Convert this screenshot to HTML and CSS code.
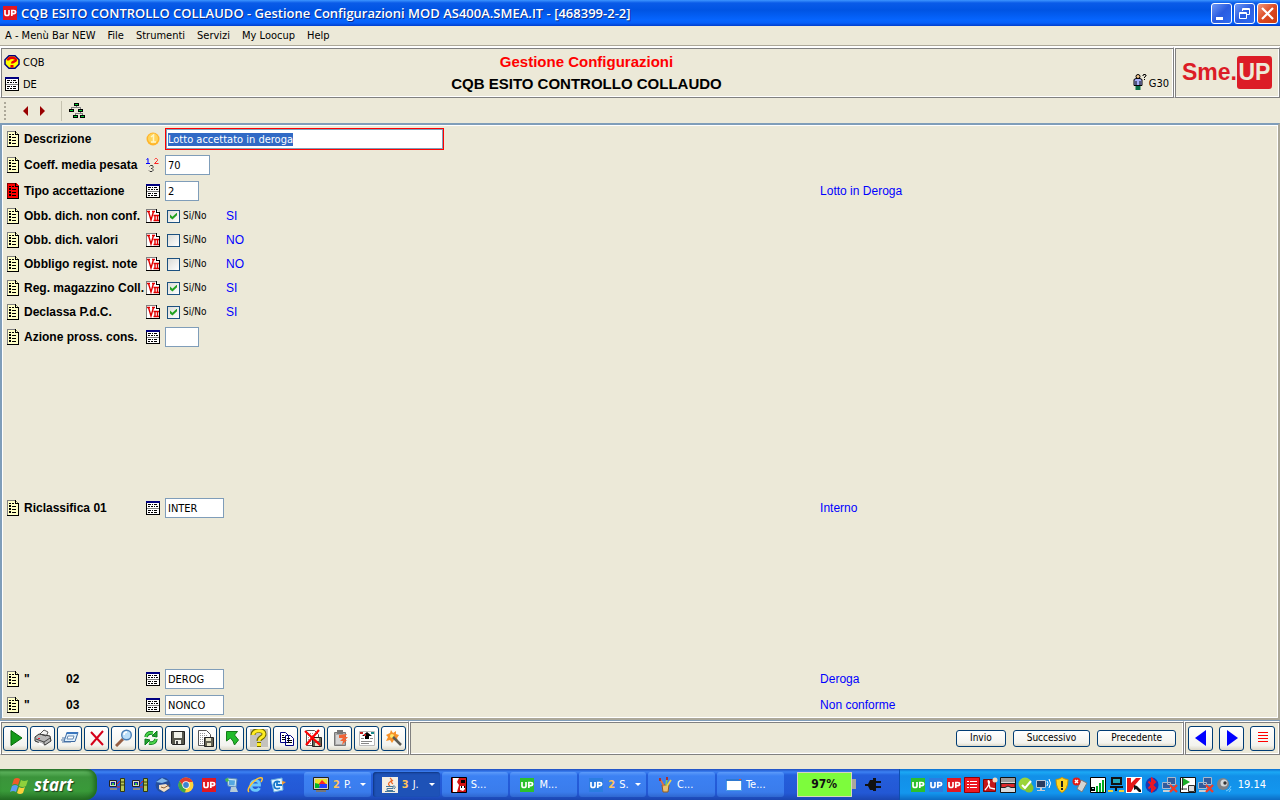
FILE: index.html
```html
<!DOCTYPE html>
<html lang="it">
<head>
<meta charset="utf-8">
<title>CQB ESITO CONTROLLO COLLAUDO</title>
<link rel="stylesheet" href="styles.css">
</head>
<body>
<svg class="sprite" aria-hidden="true">
  <symbol id="list" viewBox="0 0 12 16"><path fill="#ffffc6" d="M0 0h9l3 3v13H0z"/><path fill="#808080" d="M0 0h9v1H0zM0 0h1v15H0zM9 1h1v1H9zM10 2h1v1h-1z"/><path fill="#000" d="M0 15h12v1H0zM11 3h1v13h-1zM8 0h1v3h3v1H8z"/><path fill="#000" d="M2 3h2v1H2zM5 3h2v1H5zM2 5h2v2H2zM5 6h4v1H5zM2 8h2v2H2zM5 9h4v1H5zM2 11h2v2H2zM5 12h4v1H5z"/></symbol>
  <symbol id="list-red" viewBox="0 0 12 16"><path fill="#f00" d="M0 0h9l3 3v13H0z"/><path fill="#800" d="M0 0h9v1H0zM0 0h1v15H0zM9 1h1v1H9z"/><path fill="#000" d="M0 15h12v1H0zM11 3h1v13h-1zM8 0h1v3h3v1H8z"/><path fill="#000" d="M2 3h2v1H2zM5 3h2v1H5zM2 5h2v2H2zM5 6h4v1H5zM2 8h2v2H2zM5 9h4v1H5zM2 11h2v2H2zM5 12h4v1H5z"/></symbol>
  <symbol id="table" viewBox="0 0 14 14"><path fill="#000" d="M0 0h14v14H0z"/><path fill="#000080" d="M0 0h14v2H0z"/><path fill="#fff" d="M1 2h12v11H1z"/><path fill="#000" d="M2 3h3v1H2zM6 3h1v1H6zM8 3h3v1H8zM2 5h2v1H2zM5 5h2v1H5zM8 5h1v1H8zM10 5h2v1h-2zM2 9h3v1H2zM6 9h1v1H6zM8 9h3v1H8zM2 11h2v1H2zM5 11h2v1H5zM8 11h3v1H8z"/><path fill="#808080" d="M1 7h12v1H1z"/></symbol>
  <symbol id="vii" viewBox="0 0 14 14"><path fill="#fff" d="M0 0h10l4 4v10H0z"/><path fill="#808080" d="M0 0h10v1H0zM0 0h1v14H0z"/><path fill="#000" d="M0 13h14v1H0zM13 4h1v10h-1zM10 0h1v3h3v1h-4z"/><path fill="none" stroke="#e00000" stroke-width="1.400" d="M1 2.500h3M6 2.500h3M2.500 2.500 5 11 7.500 2.500M7.500 6.500h5.500M7.500 11.500h5.500M9 6.500v5M11.500 6.500v5"/></symbol>
  <symbol id="coin" viewBox="0 0 14 14"><circle cx="7" cy="7" r="6.500" fill="#ffb52b"/><circle cx="7" cy="6.500" r="5" fill="#ffd45c"/><path fill="none" stroke="#fff6c8" stroke-width="1.500" d="M5 5l2.500-2v7M5 10h5"/></symbol>
  <symbol id="n123" viewBox="0 0 14 14"><path fill="none" stroke="#00f" d="M.5 1.500l1.500-1v5M0 5.500h4"/><path fill="none" stroke="#f22" d="M8.500 1.500l1-1h1l1 1v1l-3 3h4"/><path fill="none" stroke="#333" d="M3.500 8.500l1-1h2l.5 1v1l-1 1h-1 1l1 1v1l-1 1H4l-1-1"/></symbol>
  <symbol id="help-oct" viewBox="0 0 16 14"><path fill="#ff0" stroke="#000080" stroke-width="1.500" d="M5 .8h6l4 4v4.500l-4 4H5l-4-4V4.800z"/><path fill="none" stroke="#e00" stroke-width="2.400" d="M4 5.500C4 2 12 2 12 5c0 2-4 1-4 3.500M6.500 11.200h3"/></symbol>
  <symbol id="tree" viewBox="0 0 16 16"><path fill="none" stroke="#808080" d="M7.500 3v2M2.500 6V4.500h9V6M11.500 9v2M6.500 12v-1.500h7V12"/><path fill="#000" d="M5 0h5v3H5zM0 6h5v3H0zM9 6h5v3H9zM4 12h5v3H4zM11 12h5v3h-5z"/><path fill="#0c3" d="M6 1h3v1H6zM1 7h3v1H1zM10 7h3v1h-3zM5 13h3v1H5zM12 13h3v1h-3z"/></symbol>
  <symbol id="person" viewBox="0 0 13 16"><path fill="#a5adf8" stroke="#000" d="M.5 5.500l2-1h4l2 1v6h-8z"/><circle cx="4.500" cy="2.500" r="2" fill="#f5c78c" stroke="#000"/><path fill="#0a7048" d="M2 12h5v4H2z"/><path stroke="#000" fill="none" d="M2.500 7v5M6.500 7v5M9.500 2V1l1-.5h1l1 .5v1l-1.500 1v1M11 5v1"/></symbol>
  <symbol id="up" viewBox="0 0 16 16"><path fill="currentColor" d="M1 1h14v14H1z"/><path fill="none" stroke="#fff" stroke-width="1.700" d="M3 5v4q0 1.500 2 1.500T7 9V5M9.800 11V5.500h2q1.800 0 1.800 1.600t-1.800 1.600h-2"/></symbol>
  <symbol id="play" viewBox="0 0 18 18"><path fill="#149a18" stroke="#066a09" d="M4 1.500v15L15 9z"/></symbol>
  <symbol id="printer" viewBox="0 0 18 18"><path fill="#f4f4f4" stroke="#555" d="M5 6l5-5 4 2-2 5z"/><path fill="#b8b8b8" stroke="#333" d="M1 8l4-3 11 2 1 5-6 4L1 12z"/><path fill="none" stroke="#444" d="M2 10l8 3 6-4M10 13v3M6 5l6 2"/><path fill="#e23" d="M4 9h2v1H4z"/><path fill="#fff" d="M5 13l5 2-1 2-5-2z"/></symbol>
  <symbol id="window" viewBox="0 0 18 18"><path fill="#dff0fc" stroke="#3b68a0" d="M6 3.500h11l-3 9H3z"/><path fill="#3b76bd" d="M6 3h11l-1 2H5z"/><path fill="#fff" stroke="#6889b0" d="M7 7h6l-1 3H6z"/><path stroke="#4c76a9" d="M1 9h3M0 11h3M1 13h9"/></symbol>
  <symbol id="x" viewBox="0 0 18 18"><path fill="none" stroke="#d50019" stroke-width="2" d="M3 3l12 13M15 2L3 16"/></symbol>
  <symbol id="search" viewBox="0 0 18 18"><path stroke="#965e43" stroke-width="3" d="M1 17l7-7"/><circle cx="11.500" cy="6" r="4.800" fill="#bcdff9" stroke="#4a7fb6" stroke-width="1.400"/><path fill="none" stroke="#fff" stroke-width="1.500" d="M9 6q0-3 3-3"/></symbol>
  <symbol id="refresh" viewBox="0 0 18 18"><path fill="none" stroke="#087a1a" stroke-width="3.600" d="M4 8q1-5 7-4M14 10q-1 5-7 4"/><path fill="none" stroke="#4bd449" stroke-width="2" d="M4 8q1-5 7-4M14 10q-1 5-7 4"/><path fill="#23a52d" stroke="#087a1a" d="M10 7l5 1 0-6zM8 11l-5-1 0 6z"/></symbol>
  <symbol id="save" viewBox="0 0 18 18"><path fill="#57574d" stroke="#222" d="M2.500 2.500h13v13h-12l-1-1z"/><path fill="#f1f1e9" d="M5 3h8v6H5zM6 11h6v4H6z"/><path fill="#444" d="M7 12h2v3H7z"/></symbol>
  <symbol id="docsave" viewBox="0 0 18 18"><path fill="#fff" stroke="#555" d="M2.500 1.500h8l4 4v11h-12z"/><path stroke="#999" stroke-dasharray="1 1" d="M4 4.500h6M4 6.500h8M4 8.500h8M4 10.500h6M4 12.500h4M4 14.500h4"/><path fill="#656354" stroke="#222" d="M8.500 8.500h9v9h-9z"/><path fill="#e7e4c8" d="M10 9h5v3h-5zM11 14h4v3h-4z"/></symbol>
  <symbol id="upleft" viewBox="0 0 18 18"><path fill="#22bb2b" stroke="#147a18" d="M3.500 2.500h11l-3 3.500 4 5-4 5q-1-4-4-7l-4 3z"/></symbol>
  <symbol id="question" viewBox="0 0 18 18"><path fill="#c4c2bd" d="M0 0h18v18H0z"/><path fill="none" stroke="#6e6800" stroke-width="5" d="M3 6C3 0 14 0 14 5c0 4-5 3-5 7M7 15.500h4"/><path fill="none" stroke="#ffed23" stroke-width="3" d="M3 6C3 1 14 0 14 5c0 4-5 3-5 7M7 15.500h4"/></symbol>
  <symbol id="copy" viewBox="0 0 18 18"><path fill="#fff" stroke="#000080" d="M3.500 3.500h5l3 3v7h-8zM8.500 6.500h5l3 3v7h-8z"/><path stroke="#000" d="M5 6.500h2M5 8.500h3M5 10.500h3M10 9.500h3M10 11.500h5M10 13.500h5"/></symbol>
  <symbol id="share" viewBox="0 0 18 18"><path fill="#aaa" stroke="#777" d="M3.500 3.500h11v13h-11z"/><path fill="#d5d5d5" d="M5 6h8v9H5z"/><path fill="#777" d="M6 1h6v4H6z"/><path fill="#f26435" d="M8 6l8-1-2 3h3l-3 3h2l-5 5 1-4H9l3-3H8z"/></symbol>
  <symbol id="upload" viewBox="0 0 18 18"><path fill="#fff" stroke="#bbb" d="M1.500 2.500h15v14h-15z"/><path fill="#000" d="M9 3l5 4h-3v3H7V7H4z"/><path fill="#c42020" d="M2 3h3v2H2zM6 5h2v2H6z"/><path fill="#168a8a" d="M13 3h3v2h-3z"/><path stroke="#888" d="M3 9.500h3M12 9.500h3M3 12.500h11M3 14.500h8"/></symbol>
  <symbol id="wand" viewBox="0 0 18 18"><path fill="#f79229" d="M6 1l2 3 3-2v3l3 1-2 3 1 3-4-1-2 3-2-3-4 1 2-4-2-2 4-2z"/><circle cx="7" cy="7" r="2" fill="#ffe76a"/><path stroke="#5b5b55" stroke-width="2.500" d="M8 8l8 8"/></symbol>
  <symbol id="left" viewBox="0 0 18 18"><path fill="#00f" d="M14 1v16L3 9z"/></symbol>
  <symbol id="right" viewBox="0 0 18 18"><path fill="#00f" d="M4 1v16l11-8z"/></symbol>
  <symbol id="lines" viewBox="0 0 18 18"><path fill="#f00" d="M4 3h10v1H4zM4 6h10v1H4zM4 9h10v1H4zM4 12h10v1H4z"/></symbol>
  <symbol id="nets" viewBox="0 0 16 14"><path fill="#d9d9cc" stroke="#222" d="M.5 2.500h7v6h-7z"/><path fill="#15229e" d="M2 4h4v3H2z"/><path fill="#3c3" d="M3 5h2v2H3z"/><path fill="#888" d="M1 10h7v2H1z"/><path stroke="#d22" d="M8 6l3-3M8 9h3"/><path fill="#b7c653" stroke="#343b0e" d="M11.500.5h4v13h-4z"/><path stroke="#343b0e" d="M12 4h3M12 7h3"/></symbol>
  <symbol id="bird" viewBox="0 0 16 16"><circle cx="8" cy="8" r="7.500" fill="#244e9b"/><path fill="#80b8eb" d="M1 5l6-4 6 3-6 2z"/><path fill="#f2dfc4" d="M4 8l7-1 4 4-6 4-5-3z"/><path stroke="#8c5e35" d="M6 10l3 1 5-3" fill="none"/></symbol>
  <symbol id="chrome" viewBox="0 0 16 16"><circle cx="8" cy="8" r="7.500" fill="#ffd43b"/><path fill="#df3d2f" d="M1.500 4A7.500 7.500 0 0 1 14.800 5H8L5 9z"/><path fill="#3ca64a" d="M1.500 4L6 11l2 1-1 3.500A7.500 7.500 0 0 1 1.500 4z"/><circle cx="8" cy="8" r="3.700" fill="#fff"/><circle cx="8" cy="8" r="2.900" fill="#3d83d2"/></symbol>
  <symbol id="pc" viewBox="0 0 16 16"><path fill="#c9e5f4" stroke="#5e8db7" d="M3 1l10 1-1 8-8-1z"/><path fill="#55a7e1" d="M5 3l6 .5-.5 5L5 8z"/><path fill="#b5cbd8" d="M7 10h5l2 5H6z"/><path fill="#49ba50" d="M1 2l3-1 1 3-3 1z"/></symbol>
  <symbol id="ie" viewBox="0 0 16 16"><path fill="none" stroke="#6cc8fb" stroke-width="2.800" d="M4 8h8.500C13 2 4 2 4 8.500S11 14 12.500 11"/><path fill="none" stroke="#ffc332" stroke-width="1.500" d="M2 15C-2 12 10-1 15 1q1 1-1 4"/></symbol>
  <symbol id="outlook" viewBox="0 0 16 16"><path fill="#e4f5ff" stroke="#69aee0" d="M1 3l11-2 1 12-9 2z"/><path fill="none" stroke="#1676ca" stroke-width="1.800" d="M10 5q-6-2-6 3t6 3M7 5v3h5"/><path fill="#f49b31" d="M12 4l4 1-4 3z"/></symbol>
  <symbol id="monitor" viewBox="0 0 16 16"><path fill="#d2cfbe" stroke="#222" d="M.5.500h15v12H.5z"/><path fill="#eee32c" d="M2 2h12v9H2z"/><path fill="#f22" d="M5 8l4-5 5 5z"/><path fill="#00b52c" d="M2 11V6l4 1 1 4z"/><path fill="#243bff" d="M6 11l1-4h7v4z"/><path fill="#777" d="M3 13h10v2H3z"/></symbol>
  <symbol id="java" viewBox="0 0 16 16"><path fill="#f4eee3" d="M0 0h16v16H0z"/><path fill="none" stroke="#ed6828" stroke-width="1.300" d="M8 1q3 2 0 4t0 4M11 3q-3 2 0 4"/><path fill="none" stroke="#47799b" d="M4 9.500h7v2H5v2h6M3 14.500h10M11 9q4 0 1 3"/></symbol>
  <symbol id="skull" viewBox="0 0 16 16"><path fill="#d41313" stroke="#000" d="M.5.500h15v15H.5z"/><path fill="#fff" d="M2 1h6L6 5l2 3-2 7H2zM9 9h5v3l-2 2-3-1z"/><path fill="#000" d="M10 3h4v3h-4zM10 9h1v2h-1zM13 9h1v2h-1z"/></symbol>
  <symbol id="brushes" viewBox="0 0 16 16"><path fill="#e9bf70" stroke="#8f5d27" d="M5 8h7l-1 7H6z"/><path stroke="#df7440" stroke-width="1.700" d="M7 9L3 2"/><path stroke="#7ec95e" stroke-width="1.700" d="M9 9l1-8"/><path stroke="#f0d04a" stroke-width="1.700" d="M10 9l4-6"/><path fill="#a33" d="M2 1h2v3H2zM9 0h2v3H9z"/></symbol>
  <symbol id="blank" viewBox="0 0 16 16"><path fill="#fff" stroke="#4a9be6" d="M.5 2.500h15v11H.5z"/><path fill="#2e78d0" d="M0 2h16v2H0z"/><path fill="#ed4c24" d="M13 2h2v1h-2z"/></symbol>
  <symbol id="plug" viewBox="0 0 17 13"><path fill="#111" d="M0 6h3l2-4h3V0h3v3h5v2h-5v3h5v2h-5v3H8v-1H5L3 8H0z"/></symbol>
  <symbol id="redlist" viewBox="0 0 16 16"><path fill="#ed1820" stroke="#910008" d="M.5.500h15v15H.5z"/><path fill="#fff" d="M3 4h2v1H3zM6 4h7v1H6zM3 7h2v1H3zM6 7h7v1H6zM3 10h2v1H3zM6 10h7v1H6z"/></symbol>
  <symbol id="pdf" viewBox="0 0 16 16"><path fill="#c51618" stroke="#7a0505" d="M1.500 2.500h12v12h-12z"/><path fill="none" stroke="#fff" stroke-width="1.300" d="M3 13Q9 6 7 4T8 11l5 1"/><circle cx="13" cy="3" r="2.500" fill="#f4d7bd"/></symbol>
  <symbol id="mask" viewBox="0 0 16 16"><path fill="#d7dadb" stroke="#111" d="M.5.500h15v15H.5z"/><path fill="#999" d="M1 1h14v4H1z"/><path fill="#e1282a" stroke="#222" d="M1 6.500h14v4h-4L8 9l-3 1.500H1z"/></symbol>
  <symbol id="skype" viewBox="0 0 16 16"><circle cx="7" cy="7" r="6.500" fill="#9bd438"/><circle cx="11" cy="11" r="4.500" fill="#86c52f"/><path fill="none" stroke="#fff" stroke-width="2" d="M4 8l3 3 6-7"/></symbol>
  <symbol id="pcwave" viewBox="0 0 16 16"><path fill="#283c60" stroke="#b4c8db" d="M.5 3.500h9v7h-9z"/><path fill="#c6cbd0" d="M4 11h2v2h3v1H1v-1h3z"/><path fill="none" stroke="#fff" d="M11 4q2 2 0 5M13 2q3 4 0 9"/></symbol>
  <symbol id="shield" viewBox="0 0 16 16"><path fill="#ffd522" stroke="#c99100" d="M8 .5q3 2 6 2 0 10-6 13-6-3-6-13 3 0 6-2z"/><path fill="#222" d="M7 4h2v6H7zM7 11h2v2H7z"/></symbol>
  <symbol id="usb" viewBox="0 0 16 16"><path fill="#d4d5d2" stroke="#777" d="M9 3l6 3-5 9-5-3z"/><circle cx="4.500" cy="4.500" r="4" fill="#e41c16"/><path stroke="#fff" stroke-width="1.500" d="M3 3l3 3M6 3L3 6"/></symbol>
  <symbol id="bars" viewBox="0 0 16 16"><path fill="#fff" stroke="#000" d="M.5.500h15v15H.5z"/><path fill="#0a2" d="M6 9h2v6H6zM9 6h2v9H9zM12 3h2v12h-2z"/><path fill="#000" d="M1 10h4v4H1z"/><path fill="#9ed" d="M2 11h2v1H2z"/></symbol>
  <symbol id="netpc" viewBox="0 0 16 16"><path fill="#111" d="M3 0h11v8H3zM2 9h13v2H2zM7 11h2v3H7z"/><path fill="#24a9ba" d="M5 2h7v4H5z"/><path fill="#eed43d" d="M0 13h5v2H0zM11 13h5v2h-5z"/></symbol>
  <symbol id="kav" viewBox="0 0 16 16"><path fill="#fff" d="M0 0h16v16H0z"/><path fill="#e51717" d="M1 1h4v5l5-5h5L9 8l-4 7H1z"/><path fill="#111" d="M8 8l3 1 4 4v2h-2l-3-3-2 1z"/></symbol>
  <symbol id="bt" viewBox="0 0 16 16"><ellipse cx="8" cy="8" rx="6.500" ry="7.500" fill="#153ab8"/><path fill="none" stroke="#ef1821" stroke-width="2" d="M4.500 4.500l6.500 6.500-3 3V2l3 3-6.500 6.500"/></symbol>
  <symbol id="netx" viewBox="0 0 16 16"><path fill="#315b9c" stroke="#a9b9cc" d="M5.500.5h8v7h-8zM.5 5.500h8v6h-8z"/><path fill="#c9d0d5" d="M1 13h7v2H1z"/><path stroke="#f23c26" stroke-width="2.300" d="M8 8l7 7M15 8l-7 7"/></symbol>
  <symbol id="db" viewBox="0 0 16 16"><path fill="#fff" stroke="#111" d="M.5.500h15v15H.5z"/><path fill="#19ad27" d="M3 1l7 4-7 4z"/><path fill="#ddd" stroke="#333" d="M8.500 8.500h6v6h-6zM1 12h6M2.500 1v12"/></symbol>
  <symbol id="speaker" viewBox="0 0 16 16"><circle cx="7" cy="7" r="6" fill="#7e8287"/><circle cx="8" cy="6" r="3.500" fill="#d4d9db"/><circle cx="9" cy="6" r="1.700" fill="#333"/><path fill="none" stroke="#7bcfff" d="M10 14q4-1 5-5M13 15l2-3"/></symbol>
</svg>

<header class="titlebar">
  <svg class="i16 red"><use href="#up"/></svg>
  <h1>CQB ESITO CONTROLLO COLLAUDO - Gestione Configurazioni MOD AS400A.SMEA.IT - [468399-2-2]</h1>
  <div class="winbtns">
    <button aria-label="Riduci a icona"><svg viewBox="0 0 19 19"><path fill="#fff" d="M4 13h7v3H4z"/></svg></button>
    <button aria-label="Ripristina"><svg viewBox="0 0 19 19"><path fill="none" stroke="#fff" d="M7.500 7V4.500h7v6H12M4.500 8.500h7v6h-7zM7 5.500h8M4 9.500h8"/></svg></button>
    <button class="close" aria-label="Chiudi"><svg viewBox="0 0 19 19"><path stroke="#fff" stroke-width="2.200" d="M4 4l11 11M15 4L4 15"/></svg></button>
  </div>
</header>
<nav class="menubar">
  <button>A - Menù Bar NEW</button><button>File</button><button>Strumenti</button><button>Servizi</button><button>My Loocup</button><button>Help</button>
</nav>
<section class="head">
  <div class="panel headmain">
    <div class="codes">
      <span><svg class="i16"><use href="#help-oct"/></svg>CQB</span>
      <span><svg class="i16"><use href="#table" x="1" y="1" width="14" height="14"/></svg>DE</span>
    </div>
    <div class="titles"><h2>Gestione Configurazioni</h2><h3>CQB ESITO CONTROLLO COLLAUDO</h3></div>
    <div class="user"><svg class="i16"><use href="#person"/></svg>G30</div>
  </div>
  <div class="panel logo"><span class="sme">Sme.</span><span class="upbox">UP</span></div>
</section>
<div class="toolbar">
  <span class="grip"></span>
  <button class="nav" aria-label="Indietro"><svg viewBox="0 0 6 10"><path fill="#900" d="M6 0v10L1 5z"/></svg></button>
  <button class="nav" aria-label="Avanti"><svg viewBox="0 0 6 10"><path fill="#900" d="M0 0v10l5-5z"/></svg></button>
  <span class="sep"></span>
  <button aria-label="Struttura"><svg class="i16 crisp"><use href="#tree"/></svg></button>
</div>

<main class="form">
  <div class="row"><svg class="li"><use href="#list"/></svg><label for="f1">Descrizione</label><svg class="ti"><use href="#coin"/></svg><span><input class="w-desc" id="f1" value="Lotto accettato in deroga"></span></div>
  <div class="row"><svg class="li"><use href="#list"/></svg><label for="f2">Coeff. media pesata</label><svg class="ti"><use href="#n123"/></svg><span><input class="w-num" id="f2" value="70"></span></div>
  <div class="row"><svg class="li"><use href="#list-red"/></svg><label for="f3">Tipo accettazione</label><svg class="ti"><use href="#table"/></svg><span><input class="w-code" id="f3" value="2"></span><output>Lotto in Deroga</output></div>
  <div class="row check"><svg class="li"><use href="#list"/></svg><b>Obb. dich. non conf.</b><svg class="ti"><use href="#vii"/></svg><span><label><input type="checkbox" checked>Si/No</label><output>SI</output></span></div>
  <div class="row check"><svg class="li"><use href="#list"/></svg><b>Obb. dich. valori</b><svg class="ti"><use href="#vii"/></svg><span><label><input type="checkbox">Si/No</label><output>NO</output></span></div>
  <div class="row check"><svg class="li"><use href="#list"/></svg><b>Obbligo regist. note</b><svg class="ti"><use href="#vii"/></svg><span><label><input type="checkbox">Si/No</label><output>NO</output></span></div>
  <div class="row check"><svg class="li"><use href="#list"/></svg><b>Reg. magazzino Coll.</b><svg class="ti"><use href="#vii"/></svg><span><label><input type="checkbox" checked>Si/No</label><output>SI</output></span></div>
  <div class="row check"><svg class="li"><use href="#list"/></svg><b>Declassa P.d.C.</b><svg class="ti"><use href="#vii"/></svg><span><label><input type="checkbox" checked>Si/No</label><output>SI</output></span></div>
  <div class="row"><svg class="li"><use href="#list"/></svg><label for="f4">Azione pross. cons.</label><svg class="ti"><use href="#table"/></svg><span><input class="w-code" id="f4"></span></div>
  <div class="spacer"></div>
  <div class="row"><svg class="li"><use href="#list"/></svg><label for="f5">Riclassifica 01</label><svg class="ti"><use href="#table"/></svg><span><input class="w-class" id="f5" value="INTER"></span><output>Interno</output></div>
  <div class="spacer"></div>
  <div class="row"><svg class="li"><use href="#list"/></svg><label for="f6" class="ditto"><i>"</i>02</label><svg class="ti"><use href="#table"/></svg><span><input class="w-class" id="f6" value="DEROG"></span><output>Deroga</output></div>
  <div class="row"><svg class="li"><use href="#list"/></svg><label for="f7" class="ditto"><i>"</i>03</label><svg class="ti"><use href="#table"/></svg><span><input class="w-class" id="f7" value="NONCO"></span><output>Non conforme</output></div>
</main>

<footer class="actions">
  <div class="panel tools">
    <button aria-label="Esegui"><svg><use href="#play"/></svg></button>
    <button aria-label="Stampa"><svg><use href="#printer"/></svg></button>
    <button aria-label="Finestra"><svg><use href="#window"/></svg></button>
    <button aria-label="Annulla"><svg><use href="#x"/></svg></button>
    <button aria-label="Cerca"><svg><use href="#search"/></svg></button>
    <button aria-label="Aggiorna"><svg><use href="#refresh"/></svg></button>
    <button aria-label="Salva"><svg><use href="#save"/></svg></button>
    <button aria-label="Salva documento"><svg><use href="#docsave"/></svg></button>
    <button aria-label="Ritorna"><svg><use href="#upleft"/></svg></button>
    <button aria-label="Aiuto"><svg><use href="#question"/></svg></button>
    <button aria-label="Copia"><svg><use href="#copy"/></svg></button>
    <button aria-label="Elimina"><svg viewBox="0 0 18 18"><use href="#docsave" width="18" height="18"/><path stroke="#f00" stroke-width="2.200" d="M1 2l15 14M15 1L2 16"/></svg></button>
    <button aria-label="Invia"><svg><use href="#share"/></svg></button>
    <button aria-label="Carica"><svg><use href="#upload"/></svg></button>
    <button aria-label="Procedura guidata"><svg><use href="#wand"/></svg></button>
  </div>
  <div class="panel commands"><button>Invio</button><button>Successivo</button><button>Precedente</button></div>
  <div class="panel pager">
    <button aria-label="Pagina precedente"><svg><use href="#left"/></svg></button>
    <button aria-label="Pagina successiva"><svg><use href="#right"/></svg></button>
    <button aria-label="Elenco"><svg><use href="#lines"/></svg></button>
  </div>
</footer>

<div class="taskbar">
  <button class="start"><svg viewBox="0 0 20 18"><path fill="#ef5a2a" d="M4 3q3-2 6 0L8 9Q5 7 2 9z"/><path fill="#8fd13c" d="M11 4q3 2 7 0l-2 6q-3 2-7 0z"/><path fill="#5b9cf5" d="M2 10q3-2 6 0l-2 6q-3-2-6 0z"/><path fill="#fbd03b" d="M9 11q3 2 6 0l-2 6q-3 2-6 0z"/></svg>start</button>
  <div class="quick">
    <svg><use href="#nets"/></svg><svg><use href="#nets"/></svg><svg><use href="#bird"/></svg><svg><use href="#chrome"/></svg><svg class="red"><use href="#up"/></svg><svg><use href="#pc"/></svg><svg><use href="#ie"/></svg><svg><use href="#outlook"/></svg>
  </div>
  <div class="tasks">
    <button class="group"><svg><use href="#monitor"/></svg><em>2</em>P.</button>
    <button class="group on"><svg><use href="#java"/></svg><em>3</em>J.</button>
    <button><svg><use href="#skull"/></svg>S...</button>
    <button><svg class="green"><use href="#up"/></svg>M...</button>
    <button class="group"><svg class="blue"><use href="#up"/></svg><em>2</em>S.</button>
    <button><svg><use href="#brushes"/></svg>C...</button>
    <button><svg><use href="#blank"/></svg>Te...</button>
  </div>
  <div class="power"><span class="battery">97%</span><svg><use href="#plug"/></svg></div>
  <div class="tray">
    <svg class="green"><use href="#up"/></svg><svg class="blue"><use href="#up"/></svg><svg class="red"><use href="#up"/></svg><svg><use href="#redlist"/></svg><svg><use href="#pdf"/></svg><svg><use href="#mask"/></svg><svg><use href="#skype"/></svg><svg><use href="#pcwave"/></svg><svg><use href="#shield"/></svg><svg><use href="#usb"/></svg><svg><use href="#bars"/></svg><svg><use href="#netpc"/></svg><svg><use href="#kav"/></svg><svg><use href="#bt"/></svg><svg><use href="#netx"/></svg><svg><use href="#db"/></svg><svg><use href="#netx"/></svg><svg><use href="#speaker"/></svg>
    <time>19.14</time>
  </div>
</div>
<script src="main.js"></script>
</body>
</html>
```
FILE: styles.css
```css
* { box-sizing: border-box; }
body {
  margin: 0;
  min-height: 100vh;
  display: flex;
  flex-direction: column;
  background: #ece9d8;
  color: #000;
  font-family: "DejaVu Sans Condensed", "DejaVu Sans", sans-serif;
  font-size: 11px;
}
button, input { font: inherit; color: inherit; }
button { padding: 0; border: 0; background: none; }
svg { display: block; flex: none; }
.sprite { position: absolute; width: 0; height: 0; }
.i16 { width: 16px; height: 16px; }
.crisp { shape-rendering: crispEdges; }
.red { color: #e01822; }
.green { color: #2cc02c; }
.blue { color: #2b7de0; }

/* Title bar */
.titlebar {
  height: 26px;
  display: flex;
  align-items: center;
  gap: 3px;
  padding: 0 2px;
  background: linear-gradient(#3d95ff 0, #0a5be8 3px, #0054e3 10px, #0665ff 20px, #0660f8 23px, #003dcc 26px);
}
.titlebar h1 {
  flex: 1;
  margin: 0;
  color: #fff;
  font: 600 13px/20px "Open Sans", "Noto Sans", sans-serif;
  text-shadow: 1px 1px #0a2c8a;
  white-space: nowrap;
}
.winbtns { display: flex; gap: 2px; }
.winbtns button {
  width: 21px;
  height: 21px;
  border: 1px solid #fff;
  border-radius: 3px;
  background: linear-gradient(135deg, #6f98f5, #2a5ce0 50%, #2f6cf0);
}
.winbtns .close { background: linear-gradient(135deg, #f0987c, #dd4a22 50%, #cc3b10); }

/* Menu */
.menubar {
  height: 20px;
  display: flex;
  align-items: center;
  gap: 12px;
  padding: 0 5px;
  border-bottom: 1px solid #aca899;
}

/* Sunken panels */
.panel {
  border: 1px solid #808080;
  border-color: #fff #808080 #808080 #fff;
  box-shadow: inset 1px 1px #808080, inset -1px -1px #fff;
}
.head { display: flex; padding-top: 1px; background: #fff; }
.head .panel { height: 51px; background: #ece9d8; }
.headmain { flex: 1; display: flex; justify-content: space-between; padding: 3px 4px 1px 3px; }
.codes { display: grid; grid-template-rows: 22px 22px; width: 80px; }
.codes span, .user { display: flex; align-items: center; gap: 3px; }
.titles { text-align: center; font-family: "Liberation Sans", Arial, sans-serif; }
.titles h2, .titles h3 { margin: 0; font-size: 15px; line-height: 22px; }
.titles h2 { color: #f00; }
.user { width: 80px; justify-content: flex-end; align-items: flex-end; padding-bottom: 6px; gap: 1px; }
.logo {
  width: 106px;
  display: flex;
  align-items: center;
  justify-content: center;
  color: #dc1c26;
  font: bold 23px/33px "Liberation Sans", Arial, sans-serif;
}
.upbox { width: 35px; border-radius: 3px; background: #dc1c26; color: #ece9d8; text-align: center; }

/* Toolbar */
.toolbar { height: 25px; display: flex; align-items: center; padding-left: 4px; }
.grip { width: 2px; height: 18px; background: repeating-linear-gradient(#aca899 0 2px, transparent 2px 4px); }
.nav { width: 6px; margin-left: 16px; }
.nav + .nav { margin-left: 12px; }
.nav svg { width: 6px; height: 10px; }
.sep { width: 1px; height: 20px; margin: 0 7px 0 15px; background: #c5c2b0; }

/* Form */
.form {
  flex: 1;
  display: flex;
  flex-direction: column;
  padding: 1px 0 0 4px;
  border: 2px solid #7f9db9;
  border-color: #7f9db9 #aca899 #aca899 #7f9db9;
  box-shadow: inset 1px 1px #fff, inset -1px -1px #fff;
}
.row {
  height: 26px;
  display: grid;
  grid-template-columns: 18px 121px 20px 1fr 36%;
  align-items: center;
  font: bold 12px/14px "Liberation Sans", Arial, sans-serif;
}
.row.check { height: 24px; }
.row > * { white-space: nowrap; }
.row output { color: #00f; font-size: 12px; font-weight: normal; }
.row span { display: flex; align-items: center; }
.row input { font: 11px/16px "DejaVu Sans Condensed", "DejaVu Sans", sans-serif; }
.row .li { width: 12px; height: 16px; margin-left: 1px; shape-rendering: crispEdges; }
.row .ti { width: 14px; height: 14px; margin-left: 1px; }
.row span > input {
  height: 20px;
  padding: 0 2px;
  border: 1px solid #7f9db9;
  border-radius: 0;
  background: #fff;
  outline: 0;
}
.row .w-desc { width: 279px; height: 22px; border: 1px solid #f00; box-shadow: inset 0 0 0 1px #7f9db9; }
.w-desc::selection { background: #316ac5; color: #fff; }
.row .w-num { width: 45px; }
.row .w-code { width: 34px; }
.row .w-class { width: 59px; }
.row span label {
  width: 61px;
  display: flex;
  align-items: center;
  gap: 3px;
  padding-left: 2px;
  font: 10px/14px "DejaVu Sans Condensed", "DejaVu Sans", sans-serif;
}
.row input[type="checkbox"] {
  appearance: none;
  width: 13px;
  height: 13px;
  margin: 0;
  border: 1px solid #1c5180;
  background: linear-gradient(135deg, #dcdcd7, #fff);
}
.row input[type="checkbox"]:checked::before {
  content: "";
  display: block;
  width: 7px;
  height: 7px;
  margin: 2px;
  background: #21a121;
  clip-path: polygon(0 30%, 35% 60%, 100% 0, 100% 40%, 35% 100%, 0 70%);
}
.ditto { display: flex; }
.ditto i { width: 42px; font-style: normal; }
.spacer { flex: 1; }

/* Action bar */
.actions { display: flex; border-top: 1px solid #7f9db9; margin-bottom: 14px; }
.actions .panel { height: 34px; display: flex; align-items: center; }
.tools { gap: 2px; padding: 0 2px; }
.commands { flex: 1; justify-content: flex-end; gap: 7px; padding-right: 7px; }
.pager { gap: 6px; padding: 0 4px 0 3px; }
.actions button {
  height: 25px;
  border: 1px solid #003c74;
  border-radius: 3px;
  background: linear-gradient(#fff, #f3f3ee 80%, #dcd8c8);
}
.tools button, .pager button { width: 25px; display: grid; place-items: center; }
.tools svg, .pager svg { width: 18px; height: 18px; }
.actions .commands button { height: 17px; padding: 0 13px; font-size: 10px; line-height: 14px; }

/* Taskbar */
.taskbar {
  height: 31px;
  display: flex;
  background: linear-gradient(#1f4fc0 0, #3c81f3 3px, #245edb 6px, #2358d5 24px, #1b46b0 31px);
  color: #fff;
}
.start {
  width: 97px;
  display: flex;
  align-items: center;
  gap: 4px;
  padding-left: 10px;
  border-radius: 0 10px 12px 0;
  background: linear-gradient(#2c7a2c 0, #5cb25c 3px, #3b943b 8px, #399a39 22px, #256d25 31px);
  box-shadow: inset -3px 0 4px #1f6a1f;
  font: italic bold 17px/20px "Open Sans", "Noto Sans", sans-serif;
  text-shadow: 1px 1px 1px #1b401b;
}
.start svg { width: 20px; height: 18px; }
.quick { display: flex; align-items: center; gap: 7px; padding-left: 12px; }
.quick svg { width: 16px; height: 16px; }
.tasks { flex: 1; display: flex; align-items: center; gap: 2px; margin-left: 18px; }
.tasks button {
  flex: 1;
  min-width: 0;
  height: 25px;
  display: flex;
  align-items: center;
  gap: 4px;
  padding: 0 5px 0 9px;
  border-radius: 3px;
  background: linear-gradient(#5c9bfa, #3c81f3 4px, #3a7cec 20px, #2f67d0);
}
.tasks button.on { background: #1e52b7; box-shadow: inset 1px 1px 2px #0f3680; }
.tasks svg { width: 16px; height: 16px; }
.tasks em { color: #ffc35a; font-style: normal; font-weight: bold; }
.tasks .group::after { content: ""; margin-left: auto; border: 3px solid transparent; border-top-color: #fff; border-bottom: 0; }
.power { width: 115px; display: flex; align-items: center; gap: 13px; padding-left: 13px; }
.power svg { width: 17px; height: 13px; }
.battery {
  position: relative;
  width: 55px;
  height: 25px;
  border: 1px solid #d8d4c0;
  background: #7dfc3c;
  color: #111;
  font: bold 12px/23px "DejaVu Sans Condensed", sans-serif;
  text-align: center;
}
.battery::after { content: ""; position: absolute; left: 54px; top: 6px; width: 4px; height: 10px; background: #aaa79c; }
.tray {
  display: flex;
  align-items: center;
  gap: 2px;
  padding: 0 14px 0 10px;
  border-left: 1px solid #0c4fb0;
  background: linear-gradient(#0d6fd0 0, #1ba9f5 3px, #1290e8 7px, #1396ee 24px, #0c6cc4 31px);
}
.tray svg { width: 16px; height: 16px; }
.tray time { margin-left: 4px; }
```
FILE: main.js
```js
const first = document.getElementById("f1");
first.focus();
first.select();
```
